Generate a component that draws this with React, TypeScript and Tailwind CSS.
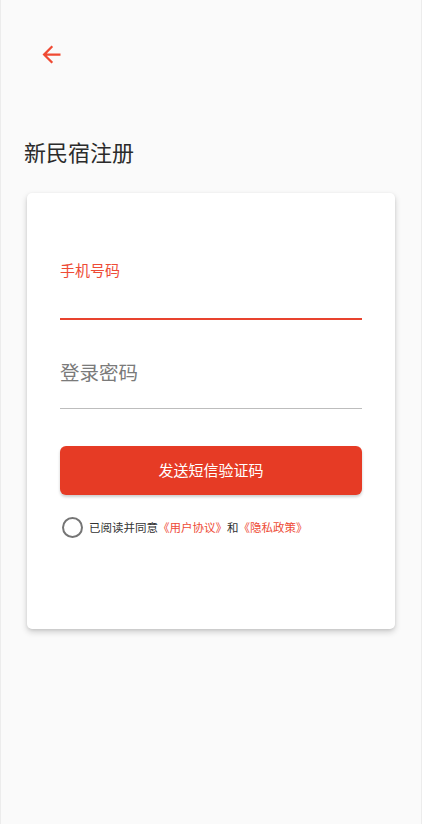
import { useState } from "react";

const FONT = { fontFamily: '"Noto Sans CJK SC", "Noto Sans", Roboto, sans-serif' };

function BackIcon() {
  return (
    <svg width="27" height="27" viewBox="0 0 24 24" fill="#ef4a33">
      <path d="M20 11H7.83l5.59-5.59L12 4l-8 8 8 8 1.41-1.41L7.83 13H20v-2z" />
    </svg>
  );
}

export default function App() {
  const [agreed, setAgreed] = useState(false);

  return (
    <div
      className="min-h-[824px] w-full border-x border-[#ececec] bg-[#fafafa]"
      style={FONT}
    >
      <div className="pl-[37px] pt-[41px]">
        <button className="block">
          <BackIcon />
        </button>
      </div>

      <h1 className="ml-[23px] mt-[72px] text-[22px] leading-[22px] text-[#2b2b2b]">
        新民宿注册
      </h1>

      <div className="mx-[26px] mt-[31px] rounded-[5px] bg-white px-[33px] pb-[91px] pt-[69px] shadow-[0_3px_6px_rgba(0,0,0,0.18),0_1px_3px_rgba(0,0,0,0.08)]">
        <div className="text-[15px] leading-[15px] text-[#ee4b36]">手机号码</div>
        <div className="mt-[41px] h-[2px] bg-[#e8432e]" />

        <div className="mt-[42px] text-[19.5px] leading-[20px] text-[#7a7a7a]">
          登录密码
        </div>
        <div className="mt-[26px] h-px bg-[#bdbdbd]" />

        <button className="mt-[37px] flex h-[49px] w-full items-center justify-center rounded-[6px] bg-[#e63b25] text-[15px] text-white shadow-[0_2px_3px_rgba(0,0,0,0.2)]">
          发送短信验证码
        </button>

        <div className="mt-[22px] flex items-center text-[11.5px] leading-[21px]">
          <button
            onClick={() => setAgreed(!agreed)}
            className="ml-[2px] h-[21px] w-[21px] shrink-0 rounded-full border-[2.5px] border-[#757575]"
          />
          <span className="ml-[6px] text-[#333333]">已阅读并同意</span>
          <span className="text-[#ee4b36]">《用户协议》</span>
          <span className="text-[#333333]">和</span>
          <span className="text-[#ee4b36]">《隐私政策》</span>
        </div>
      </div>
    </div>
  );
}
